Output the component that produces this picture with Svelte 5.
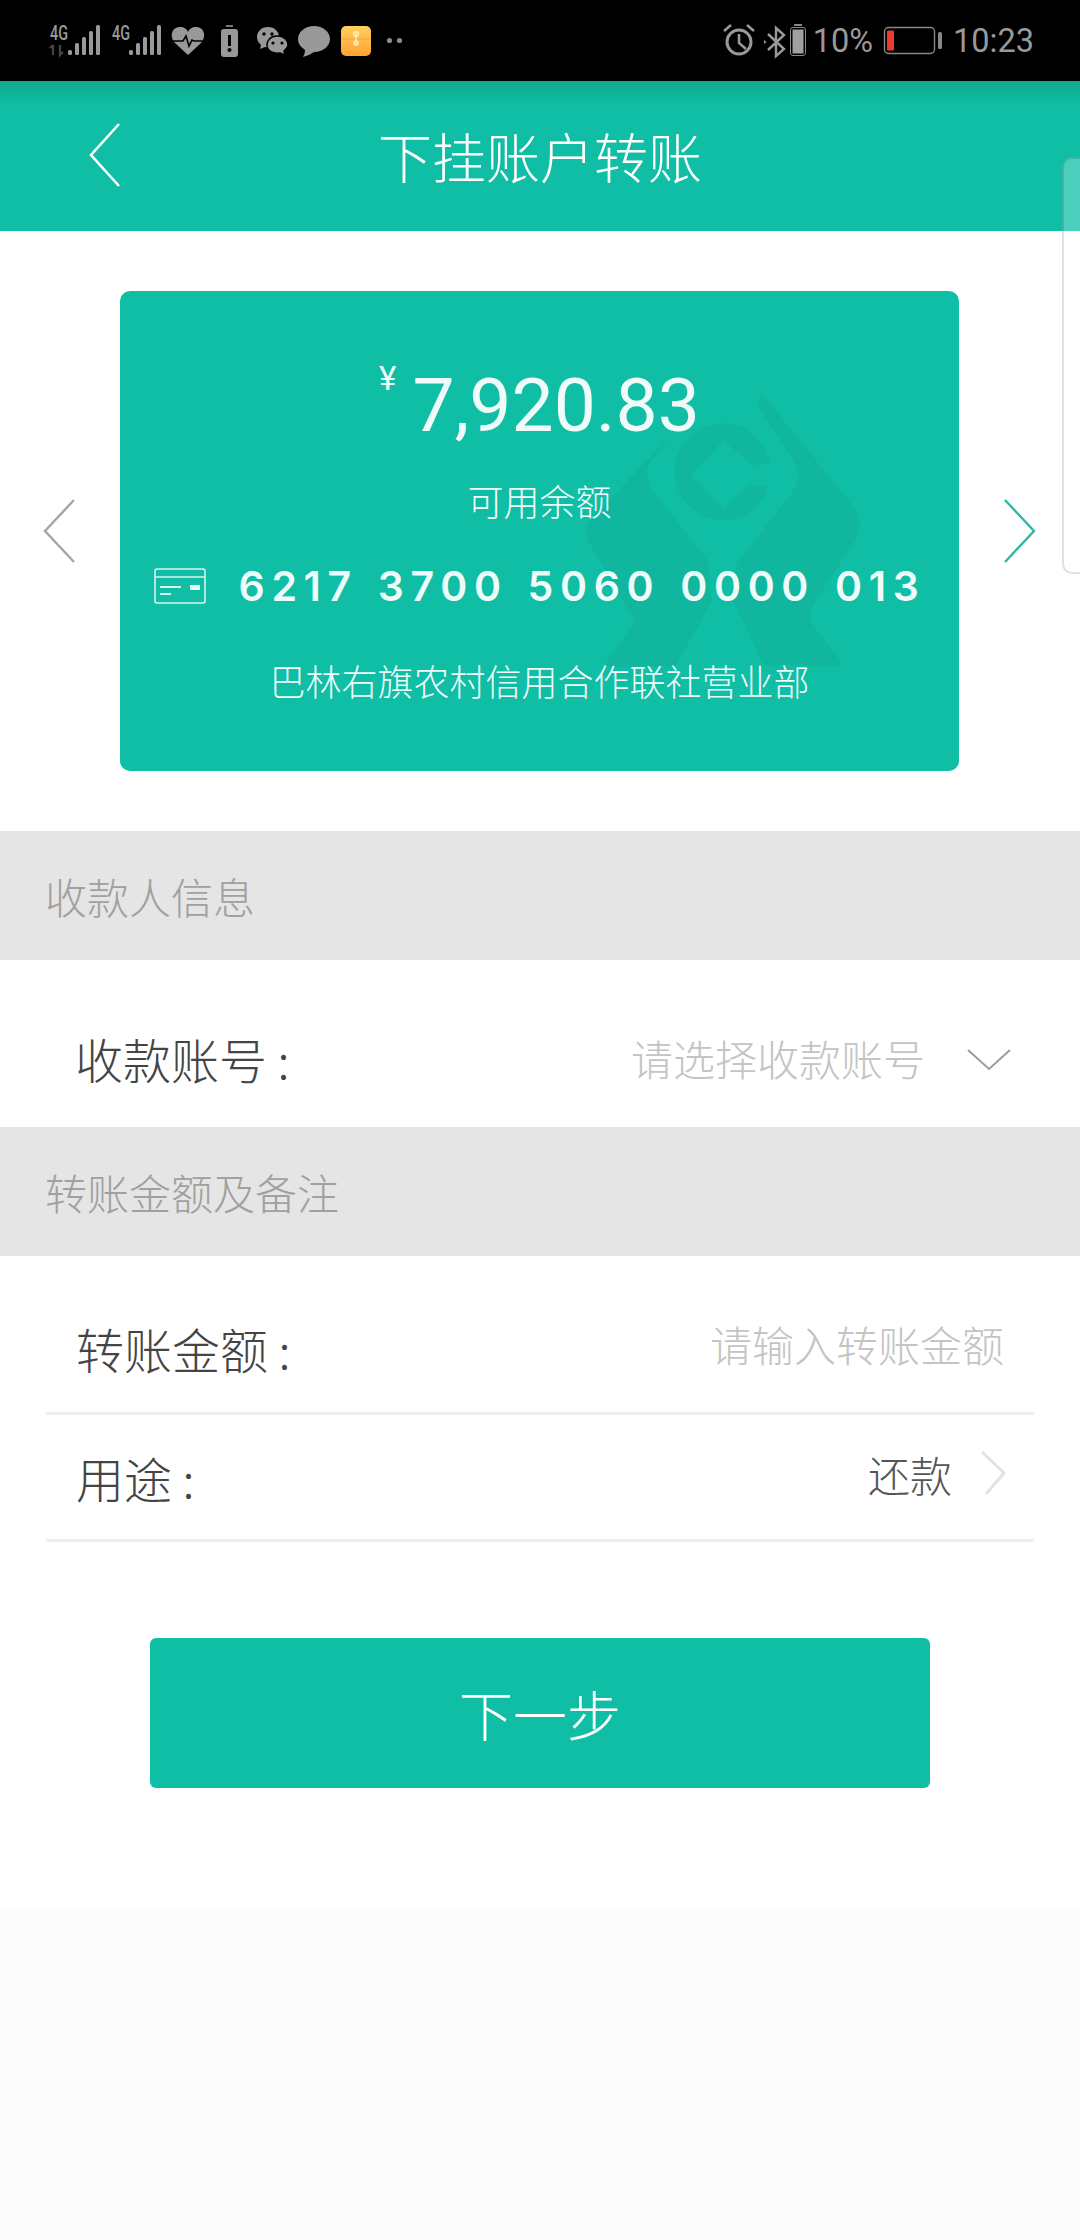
<script>
  const account = {
    balance: '7,920.83',
    number: '6217 3700 5060 0000 013',
    branch: '巴林右旗农村信用合作联社营业部'
  };
  let purpose = '还款';
</script>

<div class="page">
  <div class="status-bar">
    <svg class="status-left" viewBox="40 20 365 42" width="365" height="42">
      <!-- sim 1 -->
      <text x="50" y="40" class="net" textLength="18" lengthAdjust="spacingAndGlyphs">4G</text>
      <path d="M53 45v10M50 48l3-3M60 45v10l3-3" fill="none" stroke="#444" stroke-width="2.2" />
      <rect x="68" y="50" width="4" height="5" rx="1.5" fill="#999" />
      <rect x="75" y="43" width="4" height="12" rx="1.5" fill="#999" />
      <rect x="82" y="37" width="4" height="18" rx="1.5" fill="#999" />
      <rect x="89" y="31" width="4" height="24" rx="1.5" fill="#999" />
      <rect x="96" y="25" width="4" height="30" rx="1.5" fill="#999" />
      <!-- sim 2 -->
      <text x="112" y="40" class="net" textLength="18" lengthAdjust="spacingAndGlyphs">4G</text>
      <rect x="129" y="50" width="4" height="5" rx="1.5" fill="#999" />
      <rect x="136" y="43" width="4" height="12" rx="1.5" fill="#999" />
      <rect x="143" y="37" width="4" height="18" rx="1.5" fill="#999" />
      <rect x="150" y="31" width="4" height="24" rx="1.5" fill="#999" />
      <rect x="157" y="25" width="4" height="30" rx="1.5" fill="#999" />
      <!-- heart -->
      <path d="M188 55L175 43C169 36 172 27 180 27C184 27 187 29 188 32C189 29 192 27 196 27C204 27 207 36 201 43Z" fill="#999" />
      <path d="M171 41H183L186 36L189 46L192 40L194 41H205" fill="none" stroke="#000" stroke-width="1.6" />
      <!-- battery alert -->
      <rect x="226" y="25" width="7" height="2" fill="#777" />
      <rect x="221" y="29" width="17" height="28" rx="3" fill="#999" />
      <rect x="228" y="35" width="3" height="11" fill="#000" />
      <circle cx="229.5" cy="50" r="2" fill="#000" />
      <!-- wechat -->
      <path d="M268 27C261 27 257 32 257 37C257 41 259 43 261 45L260 49L265 47C270 48 279 45 279 37C279 32 275 27 268 27Z" fill="#999" />
      <circle cx="264" cy="34" r="1.7" fill="#000" />
      <circle cx="272" cy="34" r="1.7" fill="#000" />
      <path d="M277 36C270 36 267 41 267 45C267 50 272 54 280 53L285 55L284 51C286 49 288 47 288 45C288 40 284 36 277 36Z" fill="#999" stroke="#000" stroke-width="1.5" />
      <circle cx="273" cy="43" r="1.6" fill="#000" />
      <circle cx="282" cy="43" r="1.6" fill="#000" />
      <!-- message -->
      <path d="M314 26C305 26 298 32 298 39C298 44 301 47 305 50C305 53 304 55 303 57C307 56 311 54 314 52C323 52 330 46 330 39C330 32 323 26 314 26Z" fill="#999" />
      <!-- orange app -->
      <defs>
        <linearGradient id="folder" x1="0" y1="0" x2="0" y2="1">
          <stop offset="0" stop-color="#ffd05f" />
          <stop offset="1" stop-color="#ffa233" />
        </linearGradient>
      </defs>
      <rect x="341" y="26" width="30" height="30" rx="5" fill="url(#folder)" />
      <path d="M341 39H371" stroke="#f5a93a" stroke-width="1" />
      <path d="M356 33V44" stroke="#fff2c4" stroke-width="1.2" />
      <circle cx="356" cy="34" r="2.3" fill="none" stroke="#fff2c4" stroke-width="1.4" />
      <circle cx="356" cy="43" r="2" fill="none" stroke="#fff2c4" stroke-width="1.4" />
      <!-- more -->
      <circle cx="389.5" cy="40.5" r="2.6" fill="#8a8a8a" />
      <circle cx="399.5" cy="40.5" r="2.6" fill="#8a8a8a" />
    </svg>

    <div class="status-right">
      <svg viewBox="720 20 88 42" width="88" height="42">
        <circle cx="738" cy="42" r="12" fill="none" stroke="#999" stroke-width="3" />
        <path d="M738 34V43L745 49" fill="none" stroke="#999" stroke-width="2.6" />
        <path d="M723 31L730 25M753 31L746 25" stroke="#999" stroke-width="2.6" />
        <path d="M767 34L783 49L775 56V28L783 35L767 50" fill="none" stroke="#999" stroke-width="2.4" />
        <path d="M763 40V44L765.5 42Z" fill="#999" />
        <rect x="793" y="24" width="8" height="2" fill="#888" />
        <rect x="789.5" y="27.5" width="15" height="28" rx="2.5" fill="none" stroke="#888" stroke-width="1" />
        <rect x="791.5" y="29.5" width="11" height="24" fill="#a0a0a0" />
      </svg>
      <span class="pct">10%</span>
      <svg class="batt" viewBox="880 20 64 42" width="64" height="42">
        <rect x="883.5" y="27.5" width="50" height="26" rx="4" fill="none" stroke="#888" stroke-width="1.4" />
        <rect x="886" y="30.5" width="7" height="20" rx="1" fill="#f0392b" />
        <rect x="937" y="32" width="4" height="17" rx="1.5" fill="#888" />
      </svg>
      <span class="time">10:23</span>
    </div>
  </div>

  <header class="nav">
    <svg class="back" viewBox="0 0 32 64" width="32" height="64">
      <path d="M30 1L2 32L30 63" fill="none" stroke="#fff" stroke-width="2.6" />
    </svg>
    <h1>下挂账户转账</h1>
  </header>

  <div class="side-handle"></div>

  <section class="carousel">
    <svg viewBox="0 0 32 64" width="32" height="64">
      <path d="M31 1L2 32L31 63" fill="none" stroke="#a5a5a5" stroke-width="2.4" />
    </svg>

    <div class="card">
      <svg class="watermark" viewBox="0 0 960 930" width="320" height="310">
        <path d="M335 165L100 410C70 445 75 470 95 500L225 725L130 860H345L455 665L445 545L285 340C255 295 255 265 280 235Z" fill="#10b69e" />
        <path d="M595 60C590 80 600 90 610 105L700 240C725 285 715 310 695 340L530 550L520 660L610 855H850L755 730C745 705 750 690 765 665L880 490C905 450 905 410 880 380L630 70C615 50 600 45 595 60Z" fill="#10b69e" />
        <path fill-rule="evenodd" d="M630 250C610 175 555 130 490 130C410 130 345 195 345 275C345 355 410 420 490 420C555 420 605 380 625 320L565 315L490 385L392 285L490 180L575 255Z" fill="#10b69e" />
      </svg>

      <div class="balance">
        <span class="yen">¥</span>
        <span class="amount">{account.balance}</span>
      </div>
      <div class="balance-label">可用余额</div>
      <div class="card-no">
        <svg viewBox="0 0 52 36" width="52" height="36">
          <rect x="1" y="1" width="50" height="34" rx="2" fill="none" stroke="#d5f4ee" stroke-width="1.6" />
          <path d="M1 9H51" stroke="#d5f4ee" stroke-width="1.4" />
          <path d="M6 19H27M6 26H17" stroke="#d5f4ee" stroke-width="1.8" />
          <rect x="36" y="17" width="10" height="5" fill="#e8faf6" />
        </svg>
        <span class="number">{account.number}</span>
      </div>
      <div class="branch">{account.branch}</div>
    </div>

    <svg viewBox="0 0 32 64" width="32" height="64">
      <path d="M1 1L30 32L1 63" fill="none" stroke="#2fb9a3" stroke-width="2.4" />
    </svg>
  </section>

  <div class="band">收款人信息</div>

  <div class="field payee">
    <span class="label">收款账号 :</span>
    <span class="hint">请选择收款账号</span>
    <svg class="down" viewBox="0 0 44 22" width="44" height="22">
      <path d="M1 1L22 20L43 1" fill="none" stroke="#9c9c9c" stroke-width="2" />
    </svg>
  </div>

  <div class="band">转账金额及备注</div>

  <div class="form">
    <div class="row amount-row">
      <span class="label">转账金额 :</span>
      <span class="hint">请输入转账金额</span>
    </div>
    <div class="row purpose-row">
      <span class="label">用途 :</span>
      <span class="value">{purpose}</span>
      <svg class="more" viewBox="0 0 26 44" width="26" height="44">
        <path d="M2 1L24 22L6 43" fill="none" stroke="#e3e3e3" stroke-width="3" />
      </svg>
    </div>
  </div>

  <button class="next">下一步</button>

  <div class="footer"></div>
</div>

<style>
  :global(body) {
    background: #fff;
  }

  .page {
    position: relative;
    width: 1080px;
    height: 2240px;
    overflow: hidden;
    background: #fff;
    font-family: "Noto Sans CJK SC", "Noto Sans", sans-serif;
    font-weight: 300;
  }

  .status-bar {
    display: flex;
    align-items: center;
    justify-content: space-between;
    height: 81px;
    padding: 0 46px 0 40px;
    box-sizing: border-box;
    background: #000;
  }

  .status-left,
  .status-right svg {
    display: block;
  }

  .net {
    font-family: Roboto, sans-serif;
    font-size: 20px;
    font-weight: 500;
    fill: #999;
  }

  .status-right {
    display: flex;
    align-items: center;
    color: #999;
    font-family: Roboto, sans-serif;
    font-size: 32.5px;
    font-weight: 400;
  }

  .pct {
    margin-left: 4px;
  }

  .batt {
    margin-left: 8px;
  }

  .time {
    margin-left: 8px;
  }

  .nav {
    position: relative;
    display: flex;
    align-items: center;
    justify-content: center;
    height: 150px;
    background: linear-gradient(#10a78f, #0fbea4 22px);
  }

  .back {
    position: absolute;
    left: 89px;
    top: 42px;
  }

  h1 {
    margin: 0;
    color: #fff;
    font-size: 54px;
    font-weight: 300;
    line-height: 70px;
  }

  .side-handle {
    position: absolute;
    top: 157px;
    right: 0;
    width: 18px;
    height: 417px;
    box-sizing: border-box;
    border: 2px solid rgba(0, 0, 0, 0.12);
    border-right: none;
    border-radius: 10px 0 0 10px;
    background: rgba(255, 255, 255, 0.25);
  }

  .carousel {
    display: flex;
    align-items: center;
    gap: 45px;
    padding: 60px 43px;
  }

  .carousel > svg {
    flex: none;
  }

  .card {
    position: relative;
    flex: none;
    display: flex;
    flex-direction: column;
    align-items: center;
    width: 839px;
    height: 480px;
    box-sizing: border-box;
    padding-top: 72px;
    border-radius: 10px;
    background: #0fbea4;
    color: #eefbf8;
  }

  .watermark {
    position: absolute;
    left: 440px;
    top: 89px;
  }

  .balance,
  .balance-label,
  .card-no,
  .branch {
    position: relative;
  }

  .balance {
    display: flex;
    gap: 16px;
    height: 80px;
    padding-top: 2px;
    font-family: Roboto, sans-serif;
    font-weight: 400;
  }

  .yen {
    margin-top: -6px;
    font-size: 33px;
    line-height: 40px;
  }

  .amount {
    font-size: 75px;
    line-height: 80px;
  }

  .balance-label {
    margin-top: 30px;
    font-size: 36px;
    line-height: 50px;
  }

  .card-no {
    display: flex;
    align-items: center;
    gap: 33px;
    height: 50px;
    margin-top: 36px;
  }

  .number {
    font-family: Inter, sans-serif;
    font-size: 41px;
    font-weight: 600;
    letter-spacing: 6.65px;
    word-spacing: 3px;
    line-height: 50px;
    white-space: nowrap;
  }

  .branch {
    margin-top: 44px;
    font-size: 36px;
    line-height: 50px;
  }

  .band {
    display: flex;
    align-items: center;
    height: 129px;
    padding-left: 45px;
    background: #e5e5e5;
    color: #a0a0a0;
    font-size: 42px;
  }

  .field {
    display: flex;
    align-items: center;
    height: 167px;
    box-sizing: border-box;
  }

  .payee {
    padding: 33px 69px 0 75px;
  }

  .payee .label,
  .payee .hint,
  .purpose-row .label {
    padding-bottom: 5px;
  }

  .label {
    margin-right: auto;
    color: #444;
    font-size: 48px;
    line-height: 60px;
  }

  .hint {
    color: #c4c4c4;
    font-size: 42px;
    line-height: 60px;
  }

  .amount-row .hint {
    padding-bottom: 8px;
  }

  .down {
    margin-left: 42px;
  }

  .form {
    margin: 0 46px;
  }

  .row {
    display: flex;
    align-items: center;
    box-sizing: border-box;
    padding-left: 30px;
    border-bottom: 3px solid #eee;
  }

  .amount-row {
    height: 159px;
    padding-top: 27px;
    padding-right: 30px;
  }

  .purpose-row {
    height: 127px;
    padding-top: 4px;
    padding-right: 28px;
  }

  .value {
    padding-bottom: 10px;
    color: #555;
    font-size: 42px;
    line-height: 60px;
  }

  .more {
    margin-left: 28px;
    margin-bottom: 12px;
  }

  .next {
    display: block;
    width: 780px;
    height: 150px;
    margin: 96px auto 0;
    padding: 0;
    border: none;
    border-radius: 6px;
    background: #0fbea4;
    color: #fff;
    font: inherit;
    font-size: 54px;
  }

  .footer {
    height: 332px;
    margin-top: 120px;
    background: #fcfcfc;
  }
</style>
